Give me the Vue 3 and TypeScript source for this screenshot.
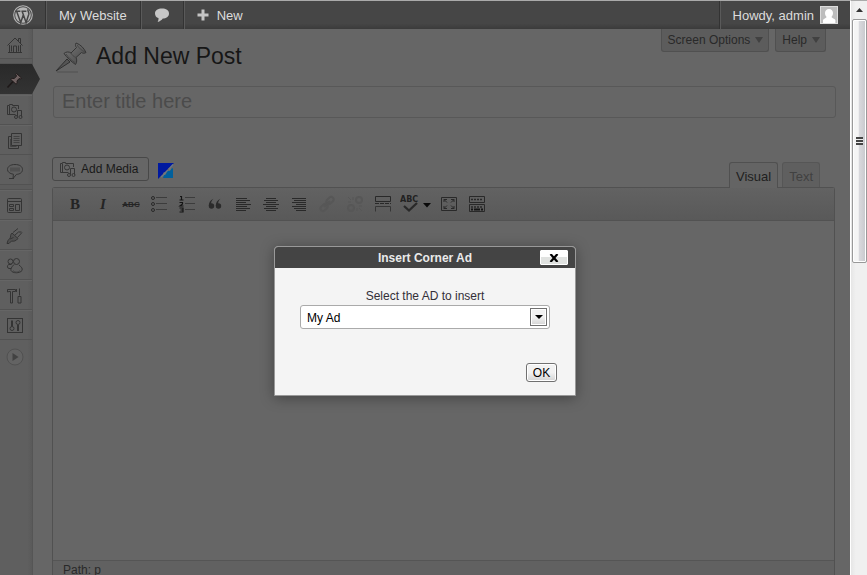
<script setup lang="ts">
import { ref } from 'vue'

interface MenuItem {
  id: string
  label: string
  active?: boolean
  groupEnd?: boolean
}

const menu: MenuItem[] = [
  { id: 'home', label: 'Dashboard', groupEnd: true },
  { id: 'pin', label: 'Posts', active: true },
  { id: 'media', label: 'Media' },
  { id: 'pages', label: 'Pages' },
  { id: 'comments', label: 'Comments', groupEnd: true },
  { id: 'appearance', label: 'Appearance' },
  { id: 'plugins', label: 'Plugins' },
  { id: 'users', label: 'Users' },
  { id: 'tools', label: 'Tools' },
  { id: 'settings', label: 'Settings' },
]

const tools: string[] = [
  'bold', 'italic', 'strike', 'bullets', 'numbers', 'quote', 'left', 'center',
  'right', 'link', 'unlink', 'more', 'spelling', 'fullscreen', 'kitchen',
]

const title = ref('')
const ad = ref('My Ad')
const open = ref(true)
</script>

<template>
  <div class="screen">
    <div class="page">
      <header class="adminbar">
        <a href="#" class="bar-item logo" aria-label="About WordPress">
          <svg width="20" height="20" viewBox="0 0 20 20">
            <circle cx="10" cy="10" r="9.3" fill="none" stroke="#b5b5b5" stroke-width="1.1" />
            <circle cx="10" cy="10" r="7.8" fill="#b5b5b5" />
            <path d="M2.2 6.300h5.200M8.400 6.300h5M3.700 6.500l4 11 2.500-7.300M9.200 6.500l3.900 11 2.700-8.200c.6-2-1.400-2.900-.8-5" fill="none" stroke="#454545" stroke-width="1.5" />
          </svg>
        </a>
        <a href="#" class="bar-item">My Website</a>
        <a href="#" class="bar-item" aria-label="Comments">
          <svg width="16" height="16" viewBox="0 0 16 16">
            <path d="M8 1.5c4 0 7 1.7 7 4.9s-3 5-6.2 5C7.6 13 6 14.2 3.6 15c.8-1.3 1-2.5.9-3.9C2.3 10.3 1 8.7 1 6.4 1 3.2 4 1.5 8 1.5z" fill="#c6c6c6" />
          </svg>
        </a>
        <a href="#" class="bar-item new">
          <svg width="12" height="12" viewBox="0 0 12 12"><path d="M6 .5v11M.5 6h11" stroke="#c4c4c4" stroke-width="3" /></svg>
          New
        </a>
        <a href="#" class="bar-item account">
          Howdy, admin
          <svg width="18" height="18" viewBox="0 0 18 18">
            <path d="M0 0h18v18H0z" fill="#ddd" />
            <path d="M1 1h16v16H1z" fill="#bdbdbd" />
            <path d="M9 3c2.5 0 4 1.7 4 4 0 1.7-.6 3-1.6 4 .8 1.4 3 1.5 4 2.900V17H3v-3.100c1-1.400 2.900-1.500 3.700-2.900C5.600 10 5 8.700 5 7c0-2.300 1.500-4 4-4z" fill="#fff" />
          </svg>
        </a>
      </header>

      <div class="workspace">
        <nav class="sidebar" aria-label="Admin menu">
          <a
            v-for="item in menu"
            :key="item.id"
            href="#"
            class="menu-item"
            :class="{ active: item.active, 'group-end': item.groupEnd }"
            :aria-label="item.label"
          >
            <svg width="18" height="18" viewBox="0 0 18 18" fill="none" stroke="#343434" stroke-width="1">
              <template v-if="item.id === 'home'">
                <path d="M1.500 9.500L9 2l7.500 7.500M12.500 5.500v-3h2v5M3.500 9v7.500h11V9" />
                <path d="M5.500 9.500v6M7.500 16v-6h3v6M12.500 9.500v6M2 16.500h14" />
              </template>
              <template v-else-if="item.id === 'pin'">
                <path d="M10.500 2.500l5 4.500-1 1-1.500-.4-2 2.400.2 2.200-1.200 1L4.800 8.500 5.800 7.300 8.300 7.500 10.600 5 9.700 3.700z" fill="#6e6060" stroke="#211b1b" />
                <path d="M7 10.500L1.500 16.500" stroke="#1d1717" stroke-width="1.600" />
              </template>
              <template v-else-if="item.id === 'media'">
                <path d="M9.500 12.500H1.500v-9h2v-1h3v1h6V7M3.500 4v8" />
                <circle cx="8" cy="7.500" r="2.500" />
                <path d="M11.500 14.500V8.500h4v6" />
                <circle cx="10" cy="15" r="1.500" /><circle cx="14.500" cy="15" r="1.500" />
              </template>
              <template v-else-if="item.id === 'pages'">
                <path d="M5.500 1.500h10v12h-10zM5 4.500H2.500v12h10V14" />
                <path d="M7.500 4.500h6M7.500 6.500h6M7.500 8.500h6M7.500 10.500h6M4.500 7v7.500h6" stroke="#424242" />
              </template>
              <template v-else-if="item.id === 'comments'">
                <path d="M9 2.500c4.500 0 7.500 2 7.500 5s-2.500 4.600-6 4.900L7 16.500l.4-4.300C4 11.800 1.500 10 1.500 7.500c0-3 3-5 7.500-5zM3 16.500h5" />
                <path d="M4 6.500h10M4 8.500h10" stroke="#505050" stroke-width="2" />
              </template>
              <template v-else-if="item.id === 'appearance'">
                <rect x="1.500" y="1.500" width="14" height="14" rx="1" />
                <path d="M2 4.500h13M3.500 7.500h4v2h-4zM9.500 7.500h4v6h-4zM3.500 11.500h4v2h-4z" />
              </template>
              <template v-else-if="item.id === 'plugins'">
                <path d="M6 6l6 5.500c-2 2.500-4 3-6.500 2.500L3 16.500H1l1-3C3 12 4.500 11 4.500 10 4.500 8 5 7 6 6z" fill="#505050" />
                <path d="M7 5.500L12 1.500M9 8l3.500-3M11.500 10.500L16 5.500M4 12l3.500-1.500M12.500 5h3" />
              </template>
              <template v-else-if="item.id === 'users'">
                <circle cx="4.500" cy="4.500" r="2.500" /><path d="M5 11.500H3C1 11 1 9 2.500 7.500h3" />
                <circle cx="10.500" cy="4.500" r="3" /><path d="M8 7.500C5.500 10 4.500 12 5 13.500c1.500 3 9 3 11 0 .8-2-.5-3.500-3-5.500" /><path d="M7 13.500c2 2 5 2 7 0" stroke="#454545" />
              </template>
              <template v-else-if="item.id === 'tools'">
                <path d="M1.500 5V2.500h8v2h-3v11.500h-2V4.500H3zM13.500 1.500v7M12 9.500h3v6.500h-3z" />
                <path d="M10.500 2v3" />
              </template>
              <template v-else>
                <rect x="1.500" y="1.500" width="15" height="14" />
                <path d="M6 3.500v6M12 8v6" stroke-width="2" /><circle cx="6" cy="11.500" r="2" /><circle cx="12" cy="5.500" r="2" />
              </template>
            </svg>
          </a>
          <button class="collapse" type="button" aria-label="Collapse menu">
            <svg width="18" height="18" viewBox="0 0 18 18">
              <circle cx="9" cy="9" r="8" fill="#636363" stroke="#515151" />
              <path d="M6.500 5l6 4-6 4z" fill="#424242" />
            </svg>
          </button>
        </nav>

        <main class="content">
          <div class="heading">
            <svg class="head-pin" width="34" height="34" viewBox="0 0 34 34">
              <defs>
                <linearGradient id="pin" x1="0" y1="0" x2="1" y2="1"><stop offset="0" stop-color="#777" /><stop offset="1" stop-color="#464646" /></linearGradient>
              </defs>
              <path d="M3 32h21" stroke="#505050" />
              <path d="M13 19L2 31l14-9z" fill="#555" stroke="#303030" />
              <path d="M22 3c-1 2-.5 3.500.5 4.500L17 13c-2-1.500-5-1.500-7 .5 3 4 7 8 11.500 11 1.500-2 1.500-5 .5-7l5.500-5c1.500 1 3 1 4.500 0C30 8 26.500 4.500 22 3z" fill="url(#pin)" stroke="#353535" />
              <path d="M23 5c2 3 4.500 5.500 8 7M17 13c1 2 2.500 3.500 5 4.500M12 14c2 3 5.500 6.500 9 8.500" fill="none" stroke="#474747" />
            </svg>
            <h1>Add New Post</h1>
            <div class="screen-meta">
              <button type="button">Screen Options<span class="tri"></span></button>
              <button type="button">Help<span class="tri"></span></button>
            </div>
          </div>

          <input v-model="title" class="title-input" type="text" placeholder="Enter title here" aria-label="Post title" />

          <div class="editor-head">
            <button class="add-media" type="button">
              <svg width="18" height="18" viewBox="0 0 18 18" fill="none" stroke="#363636" stroke-width="1">
                <path d="M9.500 12.500H1.500v-9h2v-1h3v1h8V7M3.500 4v8" />
                <circle cx="8" cy="7.500" r="2.500" />
                <path d="M11.500 14.500V8.500h4v6" />
                <circle cx="10" cy="15" r="1.500" /><circle cx="14.500" cy="15" r="1.500" />
              </svg>
              Add Media
            </button>
            <button class="corner-ad" type="button" aria-label="Insert Corner Ad" @click="open = true">
              <svg width="16" height="16" viewBox="0 0 16 16">
                <path d="M0 0h16L0 16z" fill="#0019a0" />
                <path d="M15 5v10H5l1-3 2-1 1-3 3 0 1-2z" fill="#00609c" />
                <path d="M3 14l4-3.500M7 10l3-3M11 6l4-4.500" fill="none" stroke="#6c7888" stroke-width="1.200" />
                <circle cx="6.500" cy="10.500" r="1.200" fill="#777" /><circle cx="11.500" cy="6" r="1.200" fill="#777" />
              </svg>
            </button>
            <div class="tabs">
              <button class="tab current" type="button">Visual</button>
              <button class="tab" type="button">Text</button>
            </div>
          </div>

          <section class="editor">
            <div class="toolbar" role="toolbar" aria-label="Formatting">
              <button v-for="tool in tools" :key="tool" type="button" class="tool" :class="tool" :aria-label="tool">
                <span v-if="tool === 'bold'" class="glyph">B</span>
                <span v-else-if="tool === 'italic'" class="glyph slanted">I</span>
                <span v-else-if="tool === 'strike'" class="struck">ABC</span>
                <svg v-else :width="tool === 'spelling' ? 32 : 20" height="20" :viewBox="tool === 'spelling' ? '0 0 32 20' : '0 0 20 20'" fill="none" stroke="#292929">
                  <template v-if="tool === 'bullets'">
                    <circle cx="4" cy="4" r="1.500" /><circle cx="4" cy="10" r="1.500" /><circle cx="4" cy="16" r="1.500" />
                    <path d="M7 3.500h11M7 9.500h11M7 15.500h11" stroke="#3c3c3c" />
                  </template>
                  <template v-else-if="tool === 'numbers'">
                    <path d="M3 2.500h1.500V6M2.500 6h4M2.500 8.500h3v1.500l-2.500 2h3.500M2.500 14h3.500v4H2.500M3.500 16H6" stroke="#151515" stroke-width="1.200" />
                    <path d="M8 3.500h10M8 9.500h10M8 15.500h10" stroke="#3c3c3c" />
                  </template>
                  <g v-else-if="tool === 'quote'" fill="#2b2b2b" stroke="none">
                    <circle cx="6.500" cy="12" r="2.700" /><circle cx="13.500" cy="12" r="2.700" />
                    <path d="M3.800 12c0-3.500 1.500-6 4.700-7.200C6.700 6.500 6 8 6.200 10zM10.800 12c0-3.500 1.500-6 4.700-7.200C13.700 6.500 13 8 13.200 10z" />
                  </g>
                  <path v-else-if="tool === 'left'" d="M3 4.500h11M3 6.500h14M3 8.500h10M3 10.500h15M3 12.500h11M3 14.500h14M3 16.500h10" />
                  <path v-else-if="tool === 'center'" d="M5 4.500h10M3 6.500h14M5 8.500h10M2 10.500h16M5 12.500h10M3 14.500h14M5 16.500h10" />
                  <path v-else-if="tool === 'right'" d="M3 4.500h14M5 6.500h12M3 8.500h14M7 10.500h10M3 12.500h14M5 14.500h12M7 16.500h10" />
                  <g v-else-if="tool === 'link'" stroke="#575757" stroke-width="2">
                    <rect x="9" y="4" width="8" height="5" rx="2.500" transform="rotate(-45 13 6.500)" />
                    <rect x="3" y="11" width="8" height="5" rx="2.500" transform="rotate(-45 7 13.500)" /><path d="M7 13l6-6" />
                  </g>
                  <g v-else-if="tool === 'unlink'" stroke="#575757" stroke-width="2">
                    <circle cx="14" cy="6" r="3" /><circle cx="6" cy="14" r="3" />
                    <path d="M3 3l3 3M8 3v3M3 8h3M17 17l-3-3M12 17v-3M17 12h-3" stroke-width="1" />
                  </g>
                  <template v-else-if="tool === 'more'">
                    <path d="M2.500 2.500h15v5h-15z" />
                    <path d="M2 9.500h16" stroke-dasharray="4 1" />
                    <path d="M2.500 17.500v-5h15v5" stroke="#363636" />
                  </template>
                  <template v-else-if="tool === 'spelling'">
                    <text x="0" y="8" class="abc">ABC</text>
                    <path d="M4 12l5 4.500L17 9" stroke-width="2.300" />
                    <path d="M23 9h8l-4 4.500z" fill="#090909" stroke="none" />
                  </template>
                  <template v-else-if="tool === 'fullscreen'">
                    <path d="M2.500 3.500h15v13h-15z" />
                    <path d="M5 8V5.500h3M5 5.500l3 3M15 8V5.500h-3M15 5.500l-3 3M5 12v2.500h3M5 14.500l3-3M15 12v2.500h-3M15 14.500l-3-3" />
                  </template>
                  <template v-else>
                    <path d="M2.500 2.500h15v6h-15zM2.500 10.500h15v7h-15z" />
                    <path d="M4 5.500h12M4 13h12" stroke-dasharray="2 1" stroke-width="1.500" />
                    <path d="M4 15.500h2M7 15.500h6M14 15.500h2" stroke="#151515" stroke-width="2" />
                  </template>
                </svg>
              </button>
            </div>
            <div class="canvas" contenteditable="true" role="textbox" aria-label="Post content"></div>
            <footer class="status">Path: p</footer>
          </section>
        </main>
      </div>

      <div v-if="open" class="overlay">
        <form class="dialog" role="dialog" aria-labelledby="dialog-title" @submit.prevent="open = false">
          <div class="dialog-head">
            <h2 id="dialog-title">Insert Corner Ad</h2>
            <button class="close" type="button" aria-label="Close" @click="open = false">
              <svg width="10" height="8" viewBox="0 0 10 8"><path d="M1.500 0l7 8M8.500 0l-7 8" stroke="#000" stroke-width="2.200" /></svg>
            </button>
          </div>
          <div class="dialog-body">
            <label for="ad">Select the AD to insert</label>
            <div class="picker">
              <select id="ad" v-model="ad"><option>My Ad</option></select>
              <span class="drop"><svg width="8" height="4" viewBox="0 0 8 4"><path d="M0 0h8L4 4z" /></svg></span>
            </div>
            <button class="ok" type="submit">OK</button>
          </div>
        </form>
      </div>
    </div>

    <div class="scrollbar" aria-hidden="true">
      <svg class="up" width="7" height="4" viewBox="0 0 7 4"><path d="M3.500 0L7 4H0z" fill="#333" /></svg>
      <div class="thumb"><span class="grip"></span></div>
    </div>
  </div>
</template>

<style>
body {
  margin: 0;
  background: #666;
}
</style>

<style scoped>
.screen {
  display: grid;
  grid-template-columns: 1fr 17px;
  height: 100vh;
  overflow: hidden;
  font-family: "Liberation Sans", Arial, sans-serif;
  font-size: 12px;
}
.screen *,
.screen *::before,
.screen *::after {
  box-sizing: border-box;
}
button,
input,
select {
  font: inherit;
  margin: 0;
}
button {
  padding: 0;
  border: 0;
  background: none;
  color: inherit;
}
svg {
  display: block;
  flex: none;
}
.page {
  position: relative;
  display: flex;
  flex-direction: column;
  min-width: 0;
  min-height: 0;
  background: #666;
}
.adminbar {
  display: flex;
  height: 29px;
  flex: none;
  border-top: 1px solid #aaa;
  background: linear-gradient(#464646 80%, #3b3b3b);
}
.bar-item {
  display: flex;
  align-items: center;
  padding: 0 13px;
  border-right: 1px solid #333;
  box-shadow: 1px 0 #5a5a5a;
  color: #dcdcdc;
  font-size: 13px;
  text-decoration: none;
  white-space: nowrap;
}
.logo {
  width: 46px;
}
.new {
  gap: 8px;
  border: 0;
  box-shadow: none;
}
.account {
  gap: 6px;
  margin-left: auto;
  padding: 0 12px;
  border-right: 0;
  border-left: 1px solid #5a5a5a;
  box-shadow: -1px 0 #333;
}
.workspace {
  display: flex;
  flex: 1;
  min-height: 0;
}
.sidebar {
  display: flex;
  flex-direction: column;
  width: 33px;
  flex: none;
  border-right: 1px solid #555;
  background: linear-gradient(90deg, #5f5f5f 85%, #5a5a5a);
}
.menu-item {
  position: relative;
  display: flex;
  align-items: center;
  height: 30px;
  padding: 2px 0 0 6px;
  border-bottom: 1px solid #525252;
  box-shadow: inset 0 1px #656565;
}
.menu-item.group-end {
  margin-bottom: 5px;
  box-shadow: 0 4px #5c5c5c, 0 5px #535353;
}
.menu-item.active {
  margin-bottom: 1px;
  border-bottom: 0;
  background: linear-gradient(#292929, #333);
  box-shadow: none;
}
.menu-item.active::after {
  content: "";
  position: absolute;
  top: 0;
  left: 100%;
  width: 8px;
  height: 30px;
  background: linear-gradient(#292929, #333);
  clip-path: polygon(0 0, 100% 50%, 0 100%);
}
.collapse {
  width: 32px;
  padding: 8px 6px;
}
.content {
  display: flex;
  flex: 1;
  flex-direction: column;
  min-width: 0;
  padding: 0 14px 0 19px;
}
.heading {
  display: flex;
  height: 57px;
  flex: none;
  gap: 8px;
  padding-left: 2px;
}
.head-pin {
  margin-top: 11px;
}
h1 {
  margin: 12px 0 0;
  color: #161616;
  font-size: 23px;
  font-weight: 400;
  line-height: 30px;
}
.screen-meta {
  display: flex;
  gap: 6px;
  height: 23px;
  margin: 0 10px 0 auto;
}
.screen-meta button {
  display: flex;
  align-items: center;
  gap: 5px;
  padding: 0 5px 1px 6px;
  border: 1px solid #505050;
  border-top: 0;
  border-radius: 0 0 3px 3px;
  background: #5c5c5c;
  color: #292929;
}
.tri {
  border: 4px solid transparent;
  border-top: 6px solid #414141;
  border-bottom: 0;
}
.title-input {
  height: 32px;
  flex: none;
  margin-left: 1px;
  padding: 0 8px 2px;
  border: 1px solid #585858;
  border-radius: 3px;
  outline: 0;
  background: #666;
  color: #222;
  font-size: 20px;
}
.title-input::placeholder {
  color: #4b4b4b;
  opacity: 1;
}
.editor-head {
  display: flex;
  height: 69px;
  flex: none;
  align-items: flex-end;
}
.add-media {
  display: flex;
  align-items: center;
  gap: 4px;
  height: 24px;
  margin-bottom: 6px;
  padding: 0 10px 0 6px;
  border: 1px solid #484848;
  border-radius: 3px;
  color: #191919;
}
.corner-ad {
  margin: 0 0 8px 9px;
}
.tabs {
  display: flex;
  align-items: flex-end;
  gap: 4px;
  margin: 0 16px 0 auto;
}
.tab {
  height: 25px;
  padding: 2px 6px 0;
  border: 1px solid #565656;
  border-bottom: 0;
  border-radius: 3px 3px 0 0;
  background: #5f5f5f;
  color: #414141;
  font-size: 13px;
}
.tab.current {
  z-index: 1;
  height: 26px;
  margin-bottom: -1px;
  border-color: #505050;
  background: #646464;
  color: #202020;
}
.editor {
  display: flex;
  flex: 1;
  flex-direction: column;
  min-height: 0;
  margin-right: 1px;
  border: 1px solid #515151;
  border-bottom: 0;
  border-radius: 3px 3px 0 0;
}
.toolbar {
  display: flex;
  align-items: center;
  height: 33px;
  flex: none;
  padding-left: 8px;
  border-bottom: 1px solid #525252;
  background: linear-gradient(#626262, #595959);
}
.tool {
  display: flex;
  width: 28px;
  height: 28px;
  align-items: center;
  justify-content: center;
  color: #242424;
}
.tool.spelling {
  width: 38px;
}
.glyph {
  font-family: "Liberation Serif", serif;
  font-size: 15px;
  font-weight: 700;
}
.slanted {
  font-style: italic;
}
.struck {
  font-family: "Liberation Sans", sans-serif;
  font-size: 8px;
  font-weight: 700;
  text-decoration: line-through;
}
.abc {
  fill: #222;
  stroke: none;
  font-family: "DejaVu Sans", sans-serif;
  font-size: 8px;
  font-weight: 700;
}
.canvas {
  flex: 1;
  outline: 0;
}
.status {
  height: 15px;
  flex: none;
  padding-left: 10px;
  border-top: 1px solid #555;
  background: #616161;
  color: #292929;
  line-height: 18px;
}
.overlay {
  position: absolute;
  inset: 0;
  display: flex;
  align-items: flex-start;
  justify-content: center;
  padding-top: 246px;
}
.dialog {
  width: 302px;
  border: 1px solid #999;
  border-radius: 4px 4px 0 0;
  background: #f4f4f4;
  box-shadow: 0 2px 14px rgba(0, 0, 0, 0.35);
}
.dialog-head {
  display: grid;
  grid-template-columns: 35px 1fr 35px;
  align-items: center;
  height: 21px;
  border-radius: 3px 3px 0 0;
  background: #444;
}
.dialog-head h2 {
  grid-column: 2;
  margin: 0;
  color: #eaeaea;
  font-size: 12px;
  font-weight: 700;
  line-height: 18px;
  text-align: center;
}
.close {
  display: flex;
  align-items: center;
  justify-content: center;
  width: 28px;
  height: 15px;
  border: 1px solid #fff;
  border-radius: 1px;
  background: linear-gradient(#fff 50%, #e0e2e0 50%);
}
.dialog-body {
  display: flex;
  flex-direction: column;
  padding: 20px 18px 13px;
}
label {
  color: #332f38;
  line-height: 17px;
  text-align: center;
}
.picker {
  position: relative;
  margin: 0 7px;
}
select {
  display: block;
  width: 100%;
  height: 24px;
  padding: 1px 24px 0 6px;
  border: 1px solid #aaa;
  border-radius: 3px;
  appearance: none;
  background: #fff;
  color: #000;
}
.drop {
  position: absolute;
  top: 3px;
  right: 3px;
  display: flex;
  width: 17px;
  height: 18px;
  align-items: center;
  justify-content: center;
  border: 1px solid #707070;
  box-shadow: inset 0 0 0 1px #fff;
  background: linear-gradient(#f2f2f2 50%, #d4d4d4);
  pointer-events: none;
}
.ok {
  align-self: flex-end;
  width: 31px;
  height: 19px;
  margin-top: 34px;
  border: 1px solid #707070;
  border-radius: 3px;
  box-shadow: inset 0 0 0 1px #fff;
  background: linear-gradient(#f2f2f2 50%, #d4d4d4);
  color: #000;
}
.scrollbar {
  display: flex;
  flex-direction: column;
  align-items: center;
  border-top: 1px solid #aaa;
  border-left: 1px solid #fff;
  background: linear-gradient(90deg, #e6e6e6, #f0f0f0 30%);
}
.up {
  margin: 7px 0;
}
.thumb {
  display: flex;
  align-items: center;
  justify-content: center;
  width: 15px;
  height: 244px;
  border: 1px solid #999;
  border-radius: 2px;
  box-shadow: inset 0 0 0 1px #fff;
  background: linear-gradient(90deg, #f5f5f5 40%, #d8d8dc 50%, #c8c8cc);
}
.grip {
  width: 7px;
  height: 8px;
  background: repeating-linear-gradient(#444 0 2px, #eee 2px 3px);
}
</style>
